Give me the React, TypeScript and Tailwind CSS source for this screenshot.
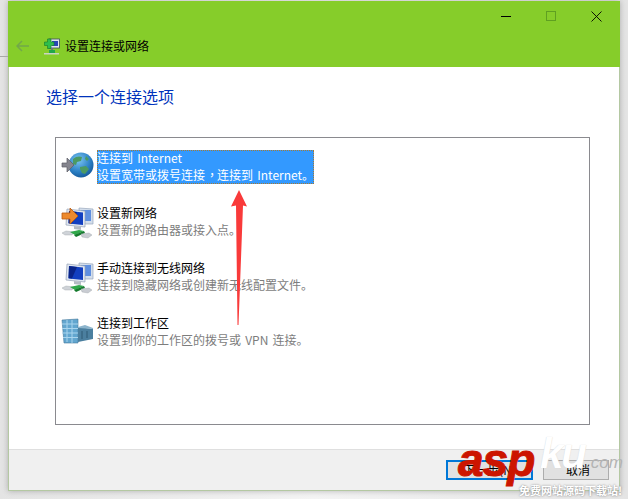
import React from "react";

const cjk = { fontFamily: '"Noto Sans CJK SC", "Noto Sans", sans-serif' };

function GlobeIcon() {
  return (
    <svg width="34" height="28" viewBox="0 0 34 28">
      <defs>
        <radialGradient id="g1" cx="0.4" cy="0.3" r="0.8">
          <stop offset="0" stopColor="#7cc6f2" />
          <stop offset="0.6" stopColor="#2a7fc4" />
          <stop offset="1" stopColor="#0f4f8e" />
        </radialGradient>
      </defs>
      <circle cx="20" cy="13" r="12.5" fill="url(#g1)" />
      <path d="M12 7c3-3 7-3 9-2l-1 4-4 1-1 3-3-1zM19 15l6-1 3 3-4 5-3-1-2-4zM25 4l3 3-2 2-2-2z" fill="#4b9a63" />
      <path d="M1 11h5V6l7 7-7 7v-5H1z" fill="#85858e" stroke="#5d5d66" strokeWidth="0.7" />
    </svg>
  );
}

function Monitors({ arrow }: { arrow?: boolean }) {
  return (
    <svg width="34" height="34" viewBox="0 0 34 34">
      <path d="M18 2l14 1v15l-14 0z" fill="#d3deec" stroke="#9aa8bb" strokeWidth="0.7" />
      <rect x="20" y="4" width="10" height="11" fill="#5f8fe0" />
      <path d="M6 3l18 2v16L5 19z" fill="#e2e8f1" stroke="#93a1b5" strokeWidth="0.7" />
      <path d="M8 5l14 1.500v12.500L7.500 17.500z" fill="#123fc0" />
      <path d="M8 5l8 1-5 11.500-3.500-.5z" fill="#0a2488" />
      <path d="M13 20v3l7 1v-3z" fill="#b4bbc4" />
      <path d="M1 27l4-2 8 1-2 3-7 0z" fill="#cfd3d8" stroke="#9da3aa" strokeWidth="0.4" />
      <path d="M9 26l9-2 5 1-9 4z" fill="#2fa84a" />
      <path d="M13 29l10-4 1 2-9 4z" fill="#157a2d" />
      <path d="M20 28l8-1 3 2-4 3-6-1z" fill="#c9ccd2" stroke="#9da3aa" strokeWidth="0.4" />
      {arrow && <path d="M1 7h8V2l8 8-8 8v-5H1z" fill="#ee8a2e" stroke="#b85c14" strokeWidth="0.8" />}
    </svg>
  );
}

function ServerIcon() {
  return (
    <svg width="34" height="26" viewBox="0 0 34 26">
      <path d="M1 2l16-1v24L3 25z" fill="#62a6cf" stroke="#47789b" strokeWidth="0.6" />
      <path d="M1 6h16M1 10.500h16M1 15h16M2 19.500h15M6 2v22M11 2v23" stroke="#a9d5ee" strokeWidth="1" />
      <path d="M17 9l15 2v10l-15 3z" fill="#4b7f9f" />
      <path d="M17 9l7-2 8 3-0 1-15-1z" fill="#8cb4cc" />
      <path d="M21 13v8M26 13v7" stroke="#2f5a75" strokeWidth="1" />
    </svg>
  );
}

function SetupIcon() {
  return (
    <svg width="16" height="17" viewBox="0 0 16 17">
      <rect x="5" y="1" width="10.500" height="9" fill="#dfe6ee" stroke="#3e4a5e" strokeWidth="0.8" />
      <rect x="8" y="3" width="6" height="5" fill="#2746b5" />
      <path d="M0.500 4h3V1h3.500v3h3v3.500H7v3H3.500v-3h-3z" fill="#2fbf4c" stroke="#137a2a" strokeWidth="0.6" />
      <rect x="5" y="12" width="6" height="3" fill="#22a84a" />
      <rect x="0" y="15" width="15" height="1.500" fill="#c9d2c4" />
      <rect x="7" y="10" width="2" height="2" fill="#6d7680" />
    </svg>
  );
}

const comma = <span className="ml-[1px] mr-[-1px]" style={{ fontFamily: '"Noto Sans CJK TC", sans-serif' }}>，</span>;

const items = [
  { icon: <GlobeIcon />, title: "连接到 Internet", desc: <>设置宽带或拨号连接{comma}连接到 Internet。</>, selected: true, w: "pt-[2px]" },
  { icon: <Monitors arrow />, title: "设置新网络", desc: "设置新的路由器或接入点。", w: "pt-[1px]" },
  { icon: <Monitors />, title: "手动连接到无线网络", desc: "连接到隐藏网络或创建新无线配置文件。", w: "pt-[1px]" },
  { icon: <ServerIcon />, title: "连接到工作区", desc: "设置到你的工作区的拨号或 VPN 连接。", w: "pt-[3px]" },
];

export default function App() {
  return (
    <div
      className="relative w-[628px] h-[499px] overflow-hidden bg-gradient-to-r from-[#e4e4e4] via-[#f4f4f4] to-[#e4e4e4] pt-px pl-2 pr-2 pb-2"
      style={cjk}
    >
      <div className="absolute left-0 top-[56px] w-2 h-px bg-[#a8a8a8]" />
      <div className="flex flex-col h-full border-l border-r border-b border-[#b4c8a2] bg-white shadow-[0_0_6px_rgba(0,0,0,0.25)]">
        <div className="relative h-[66px] bg-[#86cd2a] shrink-0 -ml-px -mr-px">
          <div className="flex justify-end items-center h-[30px] pr-[18px] gap-[35px]">
            <div className="w-[10px] h-px bg-black" />
            <div className="w-[10px] h-[10px] border border-[#5fa021]" />
            <svg width="11" height="11" viewBox="0 0 11 11"><path d="M0.500 0.500l10 10M10.500 0.500l-10 10" stroke="#000" strokeWidth="0.9" /></svg>
          </div>
          <div className="flex items-center h-[18px] mt-[6px] pl-[8px]">
            <svg width="13" height="12" viewBox="0 0 13 12" className="mr-[15px]">
              <path d="M6 1L1 6l5 5M1 6h12" fill="none" stroke="#72a84a" strokeWidth="1.500" />
            </svg>
            <SetupIcon />
            <span className="ml-[5px] text-[12px] leading-[18px] text-black">设置连接或网络</span>
          </div>
        </div>
        <div className="flex-1 flex flex-col px-[37px] pt-[17px] min-h-0">
          <h1 className="text-[16px] leading-[24px] font-normal text-[#0033bc]">选择一个连接选项</h1>
          <div className="mt-[29px] ml-[9px] mr-[30px] w-[535px] h-[288px] border border-[#8a8a8f] pt-[12px] pl-[5px]">
            {items.map((it) => (
              <div key={it.title} className="flex h-[55px] items-start">
                <div className={`w-[36px] shrink-0 ${it.w}`}>{it.icon}</div>
                <div className={it.selected ? "bg-[#3399ff] outline-1 outline-dotted outline-[#a87a30] -outline-offset-1 w-[217px] h-[34px]" : ""}>
                  <div className={`h-[17px] text-[12px] leading-[15px] [word-spacing:1.500px] ${it.selected ? "text-white" : "text-black"}`}>{it.title}</div>
                  <div className={`h-[17px] text-[12px] leading-[15px] [word-spacing:1.500px] whitespace-nowrap ${it.selected ? "text-white" : "text-[#7d7d7d]"}`}>{it.desc}</div>
                </div>
              </div>
            ))}
          </div>
        </div>
        <div className="h-[41px] shrink-0 bg-[#f0f0f0] border-t border-[#dfdfdf] flex justify-end items-start pt-[10px] pr-[10px] gap-[10px]">
          <button className="w-[87px] h-[20px] border-2 border-[#0078d7] bg-[#e1e1e1] text-[12px] leading-[16px] text-black">下一步(N)</button>
          <button className="w-[66px] h-[20px] border border-[#adadad] bg-[#e1e1e1] pl-1 text-[12px] leading-[18px] text-black">取消</button>
        </div>
      </div>

      {/* red annotation arrow */}
      <svg className="absolute left-[225px] top-[186px]" width="30" height="144" viewBox="0 0 30 144">
        <path d="M14 4L22 20.500 18 19.500 13.500 139 12.500 139 11 19.500 6 20.500Z" fill="#f93a3a" />
      </svg>

      {/* watermark */}
      <div className="absolute left-[456px] top-[438px] w-[172px] h-[61px]">
        <span
          className="absolute left-[2px] top-[-8px] text-[46px] leading-[60px] font-bold italic text-[#cc1500] [-webkit-text-stroke:1px_#cc1500]"
          style={{ fontFamily: '"Liberation Sans", sans-serif', letterSpacing: "-1px" }}
        >
          asp
        </span>
        <span
          className="absolute left-[84px] top-[-14px] text-[42px] leading-[60px] font-bold italic text-white [text-shadow:0_0_1px_#ccc]"
          style={{ fontFamily: '"Liberation Sans", sans-serif', letterSpacing: "-2px" }}
        >
          ku
        </span>
        <span
          className="absolute left-[130px] top-[10px] text-[17px] leading-[30px] italic text-[#b4b4b4]"
          style={{ fontFamily: '"Liberation Sans", sans-serif' }}
        >
          .com
        </span>
        <span className="absolute left-[63px] top-[45px] text-[11px] leading-[14px] whitespace-nowrap font-bold text-white [text-shadow:0_0_2px_#777]">
          免费网站源码下载站!
        </span>
      </div>
    </div>
  );
}
